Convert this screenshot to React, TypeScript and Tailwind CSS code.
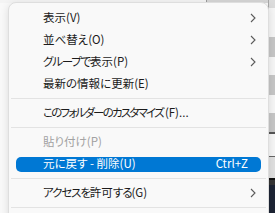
import type { ReactNode } from "react";

const Chevron = () => (
  <svg width="6" height="10" viewBox="0 0 6 10" className="shrink-0">
    <path d="M1 1 L5 5 L1 9" fill="none" stroke="#5b5b5b" strokeWidth="1.1" />
  </svg>
);

type Item = {
  label: ReactNode;
  sub?: boolean;
  disabled?: boolean;
  active?: boolean;
  shortcut?: string;
};

const Row = ({ item }: { item: Item }) => (
  <div className="h-[22px] px-[7px] flex items-center">
    <div
      className={
        "flex-1 h-[15px] rounded-[5px] flex items-center pl-[27px] pr-[13px] " +
        (item.active ? "bg-[#0078d4] text-white" : item.disabled ? "text-[#a2a2a2]" : "text-[#1b1b1b]")
      }
    >
      <span className="flex-1 whitespace-nowrap">{item.label}</span>
      {item.shortcut && <span className="whitespace-nowrap">{item.shortcut}</span>}
      {item.sub && (
        <span className="mr-[-8px] flex items-center">
          <Chevron />
        </span>
      )}
    </div>
  </div>
);

const Sep = () => (
  <div className="h-[7px] flex items-center px-[2px]">
    <div className="h-px flex-1 bg-[#e3e3e3]" />
  </div>
);

const bands = [
  ["h-[8px]", "bg-[#dcdcdc]"],
  ["h-[29px]", "bg-[#f6f6f6]"],
  ["h-[20px]", "bg-[#c6c6c6]"],
  ["h-[18px]", "bg-[#f6f6f6]"],
  ["h-[20px]", "bg-[#c6c6c6]"],
  ["h-[18px]", "bg-[#f6f6f6]"],
  ["h-[19px]", "bg-[#c6c6c6]"],
  ["h-[2px]", "bg-[#555555]"],
  ["h-[22px]", "bg-[#f6f6f6]"],
  ["h-[1px]", "bg-[#666666]"],
  ["h-[21px]", "bg-[#e0e0e0]"],
  ["h-[2px]", "bg-[#111111]"],
  ["h-[5px]", "bg-[#353535]"],
  ["flex-1", "bg-[#1d2434]"],
];

export default function App() {
  return (
    <div
      className="relative w-[275px] h-[213px] overflow-hidden flex bg-[#f7f7f7] text-[11.5px] leading-none [font-feature-settings:'palt']"
      style={{ fontFamily: '"Noto Sans CJK JP", "Noto Sans", sans-serif' }}
    >
      {/* window behind the menu */}
      <div className="flex-1 flex flex-col">
        <div className="h-[3px] flex">
          <div className="w-[206px] bg-[#f4f4f4]" />
          <div className="w-px bg-[#9a9a9a]" />
          <div className="flex-1 bg-[#d6d6d6]" />
        </div>
        <div className="flex-1 bg-[#f9f9f9]" />
      </div>
      <div className="w-px bg-[#a8a8a8]" />
      <div className="w-[6px] flex flex-col">
        {bands.map(([h, c], i) => (
          <div key={i} className={h + " " + c} />
        ))}
      </div>

      {/* context menu */}
      <div className="absolute left-[8px] top-[2px] w-[261px] h-[230px] rounded-[8px] border border-[#dedede] bg-[#f9f9f9] shadow-[0_2px_8px_rgba(0,0,0,0.12)] pt-[4px]">
        <Row item={{ label: "表示(V)", sub: true }} />
        <Row item={{ label: "並べ替え(O)", sub: true }} />
        <Row
          item={{
            label: (
              <>
                <span className="tracking-[-1.2px]">グループで</span>表示(P)
              </>
            ),
            sub: true,
          }}
        />
        <Row item={{ label: "最新の情報に更新(E)" }} />
        <Sep />
        <Row
          item={{
            label: (
              <>
                <span className="tracking-[-1.8px]">このフォルダーのカスタマイズ</span>
                <span className="ml-[2px]">(F)...</span>
              </>
            ),
          }}
        />
        <Sep />
        <Row item={{ label: "貼り付け(P)", disabled: true }} />
        <Row item={{ label: "元に戻す - 削除(U)", active: true, shortcut: "Ctrl+Z" }} />
        <Sep />
        <Row
          item={{
            label: (
              <>
                <span className="tracking-[-1.1px]">アクセスを</span>許可
                <span className="tracking-[-1.1px]">する</span>(G)
              </>
            ),
            sub: true,
          }}
        />
        <Sep />
      </div>
    </div>
  );
}
